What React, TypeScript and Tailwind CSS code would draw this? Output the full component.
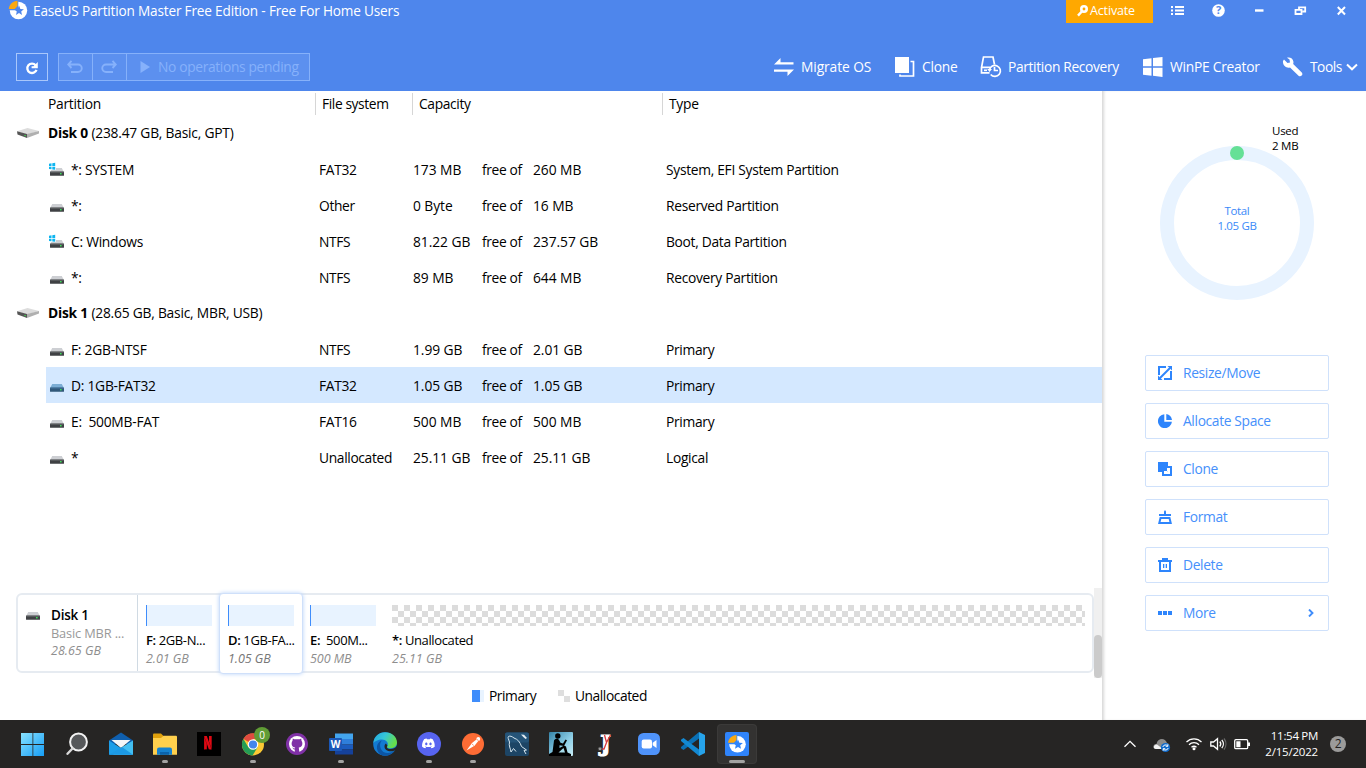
import React from "react";
import { FaDiscord } from "react-icons/fa";
import { SiNetflix } from "react-icons/si";

type Kind = "plain" | "win" | "selected";

interface Partition {
  name: string;
  fs: string;
  free: string;
  total: string;
  type: string;
  kind: Kind;
}

const disk0: Partition[] = [
  { name: "*: SYSTEM", fs: "FAT32", free: "173 MB", total: "260 MB", type: "System, EFI System Partition", kind: "win" },
  { name: "*:", fs: "Other", free: "0 Byte", total: "16 MB", type: "Reserved Partition", kind: "plain" },
  { name: "C: Windows", fs: "NTFS", free: "81.22 GB", total: "237.57 GB", type: "Boot, Data Partition", kind: "win" },
  { name: "*:", fs: "NTFS", free: "89 MB", total: "644 MB", type: "Recovery Partition", kind: "plain" },
];

const disk1: Partition[] = [
  { name: "F: 2GB-NTSF", fs: "NTFS", free: "1.99 GB", total: "2.01 GB", type: "Primary", kind: "plain" },
  { name: "D: 1GB-FAT32", fs: "FAT32", free: "1.05 GB", total: "1.05 GB", type: "Primary", kind: "selected" },
  { name: "E:  500MB-FAT", fs: "FAT16", free: "500 MB", total: "500 MB", type: "Primary", kind: "plain" },
  { name: "*", fs: "Unallocated", free: "25.11 GB", total: "25.11 GB", type: "Logical", kind: "plain" },
];

const STAR = "M11 5.600l1.400 3.300 3.500.3-2.700 2.300.8 3.500-3-1.900-3 1.900.8-3.500-2.700-2.300 3.500-.3z";

function AppMark({ className, back }: { className: string; back: string }) {
  return (
    <svg viewBox="0 0 20 20" className={className}>
      <circle cx="10.500" cy="10.500" r="8.700" fill="#fff" />
      <path d="M0 0H10.300V8.500L8.500 10.300H0Z" fill={back} />
      <path d="M9.500.8V6L6.800 9H.8C1.200 4.600 4.900 1 9.500.8Z" fill="#faa80f" />
      <path d={STAR} fill={back} />
    </svg>
  );
}

function DriveIcon({ kind }: { kind: Kind }) {
  const sel = kind === "selected";
  return (
    <svg viewBox="0 0 16 16" className="h-4 w-4 shrink-0">
      <path d="M3.200 7H12.800L15 11.200H1Z" fill={sel ? "#7cadd4" : "#cdcfd3"} />
      <rect x="1" y="10.600" width="14" height="4.200" rx=".6" fill={sel ? "#31587a" : "#3f4144"} />
      <rect x="1.500" y="10.600" width="13" height=".8" fill={sel ? "#4b7ca5" : "#7b7e81"} />
      <rect x="11" y="12" width="1.600" height="1.400" fill="#3de05a" />
      {kind === "win" && (
        <g>
          <path d="M0 1H7V9H0Z" fill="#fff" />
          <path d="M0 2.700L2.500 2.300V5H0ZM3.300 2.200L6.200 1.800V5H3.300ZM0 5.800H2.500V8.200L0 7.900ZM3.300 5.800H6.200V8.800L3.300 8.400Z" fill="#0db5f0" />
        </g>
      )}
    </svg>
  );
}

function DiskIcon() {
  return (
    <svg viewBox="0 0 22 12" className="h-3 w-[22px] shrink-0">
      <path d="M0 4.200L10.500 1 22 4 10 7.500Z" fill="#dcdcdc" />
      <path d="M0 4.200L10 6.900V11L.5 7.600Z" fill="#555" />
      <path d="M10 6.900L22 4V6.500L10 11Z" fill="#b0b0b0" />
      <rect x="7.300" y="8" width="1.600" height="1.200" fill="#44c552" />
    </svg>
  );
}

function Row({ p }: { p: Partition }) {
  return (
    <div className={`ml-[46px] flex h-9 items-center pl-[3px] ${p.kind === "selected" ? "bg-[#d4e8ff]" : ""}`}>
      <DriveIcon kind={p.kind} />
      <div className="ml-1.5 grid grow grid-cols-[248px_94px_69px_51px_133px_1fr] whitespace-pre pt-[3px]">
        <span>{p.name}</span>
        <span className="tracking-[-0.350px]">{p.fs}</span>
        <span className="tracking-[-0.050px]">{p.free}</span>
        <span className="tracking-[-0.350px]">free of</span>
        <span className="tracking-[-0.050px]">{p.total}</span>
        <span className="tracking-[-0.300px]">{p.type}</span>
      </div>
    </div>
  );
}

function DiskRow({ name, info }: { name: string; info: string }) {
  return (
    <div className="flex h-9 items-center gap-[9px] pl-[17px]">
      <DiskIcon />
      <span className="tracking-[-0.220px]">
        <b className="font-bold">{name}</b> {info}
      </span>
    </div>
  );
}

function Header() {
  return (
    <header className="h-[91px] bg-[#4e86ec] text-white">
      <div className="flex h-[23px] items-start">
        <AppMark className="ml-2 h-5 w-5" back="#4e86ec" />
        <h1 className="ml-[5px] mt-[1px] text-[13.600px] leading-5 tracking-[-0.175px]">EaseUS Partition Master Free Edition - Free For Home Users</h1>
        <div className="ml-auto flex h-[23px] w-[87px] justify-start bg-[#ffa800] pl-[11px] text-[12.500px] tracking-[-0.150px]">
          <svg viewBox="0 0 12 12" className="mt-[5px] h-3 w-3">
            <circle cx="7" cy="4" r="2.700" fill="none" stroke="#fff" strokeWidth="2.600" />
            <path d="M5.200 6L1 10.600" stroke="#fff" strokeWidth="2.400" />
          </svg>
          <span className="ml-px mt-[1px] leading-5">Activate</span>
        </div>
        <svg viewBox="0 0 213 23" className="h-[23px] w-[213px]">
          <g fill="#fff">
            <path d="M18 6h2v2h-2zM22 6h9v2h-9zM18 9.500h2v2h-2zM22 9.500h9v2h-9zM18 13h2v2h-2zM22 13h9v2h-9z" />
            <circle cx="65.500" cy="10.500" r="6.300" />
            <rect x="102" y="9.300" width="8.500" height="2.400" />
          </g>
          <text x="65.500" y="14.400" textAnchor="middle" fontSize="11" fontWeight="700" fill="#4e86ec">?</text>
          <path d="M146 9V7.300H152.200V11.500H149.500M142.500 9.800H148.500V14H142.500Z" fill="none" stroke="#fff" strokeWidth="1.800" />
          <path d="M184.800 7L192 14.500M192 7L184.800 14.500" stroke="#fff" strokeWidth="2" />
        </svg>
      </div>

      <div className="flex h-[68px] items-start pt-[30px]">
        <button className="ml-4 grid h-7 w-8 place-items-center border border-[#a9c7fb]">
          <svg viewBox="0 0 14 14" className="mt-0.5 h-3.5 w-3.5">
            <path d="M10.600 4.200A4.700 4.700 0 1 0 11.500 8.800" fill="none" stroke="#fff" strokeWidth="2.300" />
            <path d="M12.800 1V7.200H6.600V5.200H8.500L12.800 1Z" fill="#fff" />
          </svg>
        </button>
        <div className="ml-2.5 flex h-7 w-[252px] border border-[#86b1fa] bg-[#5c90ef] text-[#86b1fb]">
          <div className="grid w-[34px] place-items-center border-r border-[#86b1fa]">
            <svg viewBox="0 0 16 14" className="mr-0.5 h-3.5 w-4">
              <path d="M4.500.8L1.200 4.500 4.500 8M1.500 4.500H11A3.700 3.700 0 0 1 11 12H4" fill="none" stroke="currentColor" strokeWidth="1.900" />
            </svg>
          </div>
          <div className="grid w-[34px] place-items-center border-r border-[#86b1fa]">
            <svg viewBox="0 0 16 14" className="mr-0.5 h-3.5 w-4">
              <path d="M11.500.8L14.800 4.500 11.500 8M14.500 4.500H5A3.700 3.700 0 0 0 5 12H12" fill="none" stroke="currentColor" strokeWidth="1.900" />
            </svg>
          </div>
          <svg viewBox="0 0 10 12" className="ml-[13px] mt-[7px] h-3 w-2.5">
            <path d="M.5 0L10 6 .5 12Z" fill="currentColor" />
          </svg>
          <span className="ml-2 whitespace-nowrap leading-[26px] tracking-[-0.350px]">No operations pending</span>
        </div>

        <nav className="ml-auto flex h-7 items-center whitespace-nowrap">
          <div className="flex w-[121px] items-center gap-1.5">
            <svg viewBox="0 0 22 20" className="-ml-px h-5 w-[22px]">
              <path d="M1 7.500L7.500 1V5.300H20.500V7.500ZM21 12.500L14.500 19V14.700H1V12.500Z" fill="#fff" />
            </svg>
            <span className="tracking-[-0.100px]">Migrate OS</span>
          </div>
          <div className="flex w-[85px] items-center gap-1.5">
            <svg viewBox="0 0 21 20" className="-ml-px mr-px h-5 w-[21px]">
              <path d="M1 0H15V16H1Z" fill="#fff" />
              <path d="M16.500 4.500H19.500V19H6V17.500" fill="none" stroke="#fff" strokeWidth="1.700" />
            </svg>
            <span>Clone</span>
          </div>
          <div className="flex w-[163px] items-center gap-1.5">
            <svg viewBox="0 0 22 22" className="h-[22px] w-[22px]">
              <g fill="none" stroke="#fff" strokeWidth="1.700">
                <path d="M9.500 16.800H1.500V11.500L3.500 1H13L14.500 8.500M1.500 11.300H10" />
                <path d="M4 14.300H7" />
                <path d="M9.500 14A5.500 5.500 0 1 1 10.700 18.500M14.500 11V14.500H18" />
              </g>
              <path d="M7.200 13H12L9.600 16Z" fill="#fff" />
            </svg>
            <span className="tracking-[-0.350px]">Partition Recovery</span>
          </div>
          <div className="flex w-[139px] items-center gap-1.5">
            <svg viewBox="0 0 21 20" className="-ml-px mr-px h-5 w-[21px]">
              <path d="M1 2.200L9.500 1.200V9.200H1ZM11 1L20.500 0V9.200H11ZM1 10.800H9.500V18.800L1 17.800ZM11 10.800H20.500V20L11 18.800Z" fill="#fff" />
            </svg>
            <span>WinPE Creator</span>
          </div>
          <div className="flex w-[84px] items-center">
            <svg viewBox="0 0 22 20" className="h-5 w-[22px]">
              <path d="M2 2.500L5.500 6 8 5.500 7.500 2.500 5 .8C8 0 11 1.500 11.500 5L11.200 7 20 15.800C21.300 18.200 18.800 20.200 16.800 19L8 10.500C4.500 11.500.5 8.500 1 4Z" fill="#fff" />
            </svg>
            <span className="ml-1.5 tracking-[-0.500px]">Tools</span>
            <svg viewBox="0 0 12 8" className="ml-1 h-2 w-3">
              <path d="M1 1.500L6 6.300 11 1.500" fill="none" stroke="#fff" strokeWidth="2" />
            </svg>
          </div>
        </nav>
      </div>
    </header>
  );
}

function MapCell({ drive, label, size, active }: { drive: string; label: string; size: string; active?: boolean }) {
  return (
    <div
      className={`flex shrink-0 flex-col ${
        active
          ? "z-10 -mx-px -mb-[3px] -mt-[2px] w-[84px] rounded border border-[#cfe0fa] bg-white pl-2 pt-[11px] shadow-[0_0_4px_#b9d3fa]"
          : "w-[82px] pl-2 pt-[10px]"
      }`}
    >
      <div className="h-[21px] w-[66px] border-l border-[#3f8dfb] bg-[#e8f3ff]" />
      <span className="mt-[5px] whitespace-pre text-[13px] leading-[18px] tracking-[-0.380px]">
        <b className="font-semibold">{drive}</b>
        {label}
      </span>
      <span className={`text-[12.500px] italic leading-[19px] tracking-[-0.050px] ${active ? "text-[#777]" : "text-[#8e8e8e]"}`}>{size}</span>
    </div>
  );
}

function DiskMap() {
  return (
    <section className="flex h-[90px]">
      <div className="ml-[16px] mt-[5px] flex h-[80px] w-[1078px] rounded-md border-2 border-[#e6ebf1]">
        <div className="flex w-[120px] border-r border-[#d0dae3] pl-[7px] pt-[11px]">
          <div className="-mt-px">
            <DriveIcon kind="plain" />
          </div>
          <div className="ml-2.5 flex flex-col whitespace-nowrap text-[12.800px] leading-[18px]">
            <b className="text-[13.500px] font-semibold leading-[19px]">Disk 1</b>
            <span className="-mt-px tracking-[-0.150px] text-[#999]">Basic MBR ...</span>
            <span className="text-[12.500px] italic leading-[17px] tracking-normal text-[#8e8e8e]">28.65 GB</span>
          </div>
        </div>
        <MapCell drive="F:" label=" 2GB-N..." size="2.01 GB" />
        <MapCell drive="D:" label=" 1GB-FA..." size="1.05 GB" active />
        <MapCell drive="E:" label="  500M..." size="500 MB" />
        <div className="flex flex-col pl-2 pt-[10px]">
          <div className="h-[21px] w-[693px] bg-[repeating-conic-gradient(#ffffff_0_25%,#dcdcdc_0_50%)] bg-[length:12px_12px]" />
          <span className="mt-[5px] text-[13px] leading-[18px] tracking-[-0.380px]">
            <b className="font-semibold">*:</b> Unallocated
          </span>
          <span className="text-[12.500px] italic leading-[19px] tracking-normal text-[#8e8e8e]">25.11 GB</span>
        </div>
      </div>
      <div className="flex w-2 flex-col justify-end bg-[#f0f0f0]">
        <div className="h-[43px] rounded bg-[#cbcbcb]" />
      </div>
    </section>
  );
}

const actions: { label: string; icon: React.ReactNode }[] = [
  {
    label: "Resize/Move",
    icon: (
      <>
        <path d="M8 1H1V9M13 5V13H6" fill="none" stroke="currentColor" strokeWidth="2" />
        <path d="M2 12L12 2" stroke="currentColor" strokeWidth="1.900" />
        <path d="M9.500 0H14V4.500ZM0 9.500V14H4.500Z" fill="currentColor" />
      </>
    ),
  },
  {
    label: "Allocate Space",
    icon: <path d="M6.300.2V7.700H13.900A7 7 0 1 1 6.300.2ZM8.300 0A7 7 0 0 1 14 6H8.300Z" fill="currentColor" />,
  },
  {
    label: "Clone",
    icon: (
      <>
        <path d="M0 0H10V10H0Z" fill="currentColor" />
        <path d="M10 5H13V13H5V10" fill="none" stroke="currentColor" strokeWidth="2" />
        <path d="M6 9.500H9.500V6" fill="none" stroke="#fff" strokeWidth="1" />
      </>
    ),
  },
  {
    label: "Format",
    icon: (
      <>
        <path d="M6 1.500L7 0 8 1.500V4H13V6H1V4H6Z" fill="currentColor" />
        <path d="M2.500 8H11.500L12.700 13H1.300Z" fill="none" stroke="currentColor" strokeWidth="2" />
      </>
    ),
  },
  {
    label: "Delete",
    icon: (
      <path d="M0 2H4V0H10V2H14V4H13V14H1V4H0ZM3 4V12H11V4ZM5 6H6.300V10H5ZM7.700 6H9V10H7.700Z" fill="currentColor" fillRule="evenodd" />
    ),
  },
  { label: "More", icon: <path d="M0 5H4V9H0ZM5 5H9V9H5ZM10 5H14V9H10Z" fill="currentColor" /> },
];

function SidePanel() {
  return (
    <aside className="flex w-[264px] flex-col shadow-[inset_3px_0_3px_-1px_#d8d8d8]">
      <div className="relative ml-[58px] mt-[55px] grid h-[154px] w-[154px] place-items-center rounded-full border-[14px] border-[#e8f3ff]">
        <span className="absolute -top-3.5 left-[56px] h-3.5 w-3.5 rounded-full bg-[#65e096]" />
        <div className="mb-2.5 text-center text-[11.500px] leading-[15px] tracking-[-0.350px] text-[#3a89f8]">
          Total
          <br />
          1.05 GB
        </div>
        <div className="absolute -top-[37px] left-[98px] whitespace-nowrap text-[11.500px] leading-[15px] tracking-[-0.250px]">
          Used
          <br />2 MB
        </div>
      </div>
      <div className="ml-[43px] mt-[55px] flex w-[184px] flex-col gap-3 text-[#4690fb]">
        {actions.map((a) => (
          <button key={a.label} className="flex h-9 items-center rounded-[2px] border border-[#cfe1fb] px-3">
            <svg viewBox="0 0 14 14" className="h-3.5 w-3.5 text-[#2e85fc]">
              {a.icon}
            </svg>
            <span className="ml-[11px] pt-px tracking-[-0.350px]">{a.label}</span>
            {a.label === "More" && (
              <svg viewBox="0 0 6 8" className="ml-auto mr-0.5 h-2 w-1.5">
                <path d="M1 .5L4.500 4 1 7.500" fill="none" stroke="#3f8dfb" strokeWidth="1.900" />
              </svg>
            )}
          </button>
        ))}
      </div>
    </aside>
  );
}

const apps: { name: string; open?: "dot" | "active"; icon: React.ReactNode }[] = [
  {
    name: "start",
    icon: (
      <>
        <defs>
          <linearGradient id="start" gradientUnits="userSpaceOnUse" x1="0" y1="0" x2="24" y2="24">
            <stop offset="0" stopColor="#8ae3ff" />
            <stop offset="1" stopColor="#139cf6" />
          </linearGradient>
        </defs>
        <path d="M0 1H11.500V12H0ZM12.300 1H23V12H12.300ZM0 13H11.500V24H0ZM12.300 13H23V24H12.300Z" fill="url(#start)" />
      </>
    ),
  },
  {
    name: "search",
    icon: (
      <>
        <circle cx="13.500" cy="10" r="8.400" fill="#56585a" stroke="#f2f2f2" strokeWidth="2" />
        <path d="M7.500 16.500L2.500 21.800" stroke="#d8d8d8" strokeWidth="2.400" strokeLinecap="round" />
      </>
    ),
  },
  {
    name: "mail",
    icon: (
      <>
        <path d="M0 8.500L12 .5 24 8.500V12H0Z" fill="#0f5fae" />
        <path d="M2.500 8H21.500L12 16Z" fill="#f4f6f8" />
        <path d="M0 8.500L15 18 24 22.800H0Z" fill="#1d9ee8" />
        <path d="M24 8.500V22.800H4L14 14.500Z" fill="#42bff2" />
        <path d="M0 22.800L13 15 24 22.800Z" fill="#1c99e4" />
      </>
    ),
  },
  {
    name: "files",
    open: "dot",
    icon: (
      <>
        <path d="M0 2.500Q0 1.500 1 1.500H8L10.500 4V8H0Z" fill="#e0a10c" />
        <path d="M0 6H8L10.500 3.800H23Q24 3.800 24 5V22.800H0Z" fill="#ffd04d" />
        <path d="M4 22.800V17.500Q4 15.500 6 15.500H17Q19 15.500 19 17.500V22.800Z" fill="#1582cf" />
        <path d="M7 22.800V20H16V22.800Z" fill="#0b63ab" />
      </>
    ),
  },
  {
    name: "netflix",
    icon: (
      <>
        <rect width="24" height="24" fill="#000" />
        <SiNetflix x="4" y="4" width="16" height="16" color="#e00914" />
      </>
    ),
  },
  {
    name: "chrome",
    open: "dot",
    icon: (
      <>
        <circle cx="12" cy="12.500" r="11" fill="#fbc934" />
        <path d="M12 12.500L2.400 7A11 11 0 0 1 21.600 7H12Z" fill="#df4b40" />
        <path d="M2.400 7A11 11 0 0 0 11.500 23.500L16.500 15.500 7.500 15.500Z" fill="#249d55" />
        <circle cx="12" cy="12.500" r="5.200" fill="#fff" />
        <circle cx="12" cy="12.500" r="4.100" fill="#4285ee" />
      </>
    ),
  },
  {
    name: "github",
    icon: (
      <>
        <circle cx="12" cy="12" r="11" fill="#8031a7" />
        <circle cx="12" cy="12" r="8" fill="#fff" />
        <path
          d="M12 7.300C13.200 7.300 14 7.400 14.700 7.200L16.200 6.600 16.500 8.700C18.200 11.200 17.400 15.300 13.800 15.600L14.300 20.200H9.800V17.500C8 17.800 8 16 7 15.600 8.300 15.500 8.600 17 9.800 16.200L10.200 15.600C6.600 15.300 5.800 11.200 7.500 8.700L7.800 6.600 9.300 7.200Z"
          fill="#8031a7"
        />
      </>
    ),
  },
  {
    name: "word",
    open: "dot",
    icon: (
      <>
        <path d="M6 1.500H24V7H6Z" fill="#43a5ee" />
        <path d="M6 7H24V12.500H6Z" fill="#2f7fdb" />
        <path d="M6 12.500H24V17.500H6Z" fill="#1c5cbe" />
        <path d="M6 17.500H24V22.500H6Z" fill="#15419a" />
        <rect y="6" width="13" height="13" rx="1" fill="#1b58b8" />
        <text x="6.500" y="16" textAnchor="middle" fontSize="10" fontWeight="700" fill="#fff">W</text>
      </>
    ),
  },
  {
    name: "edge",
    icon: (
      <>
        <defs>
          <linearGradient id="edge" x1="0" x2="1" y1="0" y2=".4">
            <stop offset="0" stopColor="#22a7e0" />
            <stop offset=".5" stopColor="#35c6d8" />
            <stop offset="1" stopColor="#66df4b" />
          </linearGradient>
        </defs>
        <circle cx="12" cy="12" r="11.800" fill="#137bd2" />
        <path d="M.4 11C1 4.500 6 .2 12 .2 19 .2 24 5 24 10.500 24 14.500 20.500 16.300 17 16.300 14 16.300 13.500 15 14.500 13.700 16 11 13 7.500 9 7.500 5 7.500 1.500 9.500.4 11Z" fill="url(#edge)" />
        <path d="M9 8.500C6 11 6.500 17 10.500 20 14 22 19.500 21 22 17.700 18 25 9 25.500 5.500 20.500 2 15 5 9.500 9 8.500Z" fill="#0c55a4" />
        <path d="M14.500 13.700C13 15.500 14.500 17 17.500 17 20 17 22.500 16 24 14V18L21 18.800C16 20.500 11.500 18 11.500 14.500 11.500 13 12 12 13 11.500Z" fill="#262524" />
      </>
    ),
  },
  {
    name: "discord",
    open: "dot",
    icon: (
      <>
        <circle cx="12" cy="12" r="12" fill="#5764f0" />
        <FaDiscord x="4.500" y="4.500" width="15" height="15" color="#fff" />
      </>
    ),
  },
  {
    name: "postman",
    open: "dot",
    icon: (
      <>
        <circle cx="12" cy="12" r="11" fill="#fd6c35" />
        <path d="M5.500 18.500L11 11 17 6.300 18.300 7.800 13.500 13.700Z" fill="#fff" />
        <circle cx="17.300" cy="7" r="1.900" fill="#fff" />
        <path d="M11 12L12.800 13.500M15.700 7L17.500 9" stroke="#fd6c35" strokeWidth=".7" />
      </>
    ),
  },
  {
    name: "mysql",
    icon: (
      <>
        <rect y=".5" width="24" height="23.500" rx="2" fill="#1d4565" />
        <rect y=".5" width="24" height="10" rx="2" fill="#255478" />
        <path d="M6 20C5.500 16 3.500 14 4.500 10 3.500 7 2.500 5.500 3.500 4.500 5 3.500 7 4.500 9 6 13 7.500 15 10 16.500 14.500L21.500 18 19 18.500 21 22M6 20L8.500 16.500 11 19.500" fill="none" stroke="#d5e5ee" strokeWidth="1" />
        <path d="M16 2.500L19 2.700 22 6 20.500 7 17.800 4.500Z" fill="#e6eef3" />
      </>
    ),
  },
  {
    name: "kindle",
    icon: (
      <>
        <defs>
          <linearGradient id="kindle" x1="0" x2="1" y1="0" y2="1">
            <stop offset="0" stopColor="#3483a8" />
            <stop offset=".6" stopColor="#91d1e8" />
            <stop offset="1" stopColor="#c8edf5" />
          </linearGradient>
        </defs>
        <rect width="24" height="24" rx="1" fill="url(#kindle)" />
        <circle cx="8.800" cy="4" r="2.700" fill="#000" />
        <path d="M5 8.500C6 6.500 9 6.300 10 8L11.500 10.800 14 11.500 16.500 7.500 18 8.200 15 14 10.500 13.300 10.500 16 15 13.500 17 14.500 18.500 20.500 22 22V24H0V22L3.500 20Z" fill="#000" />
        <path d="M14.500 16L16 20.500H9.500Z" fill="#a5dbea" />
      </>
    ),
  },
  {
    name: "journal",
    icon: (
      <>
        <text
          x="12.500"
          y="18.500"
          textAnchor="middle"
          fontFamily="DejaVu Serif, serif"
          fontSize="22"
          fontWeight="700"
          letterSpacing="0"
          fill="#fff"
          stroke="#fff"
          strokeWidth="1.200"
        >
          J
        </text>
        <path d="M11.500 3L13.500 10.500 17.500 3M13.500 10.500L11 17H8" fill="none" stroke="#d83a3f" strokeWidth="1.300" />
        <circle cx="7" cy="16.800" r="1.900" fill="#999" stroke="#333" strokeWidth=".8" />
      </>
    ),
  },
  {
    name: "zoom",
    icon: (
      <>
        <rect x="1" y="1" width="22" height="22" rx="5.500" fill="#4f93fa" />
        <rect x="4.700" y="7.500" width="10.300" height="9" rx="2" fill="#fff" />
        <path d="M15.700 10.800L19.500 8V16L15.700 13.200Z" fill="#fff" />
      </>
    ),
  },
  {
    name: "code",
    icon: (
      <>
        <path d="M18 0V6.500L2.500 18 0 16.200V15Z" fill="#0a70b5" />
        <path d="M18 24V17.500L2.500 6 0 7.800V9Z" fill="#1389d2" />
        <path d="M18 0L24 3V21L18 24Z" fill="#26a3ea" />
      </>
    ),
  },
  {
    name: "partition",
    open: "active",
    icon: (
      <>
        <rect width="24" height="24" rx="2" fill="#2f84fb" />
        <circle cx="12.500" cy="12.300" r="8.300" fill="#fff" />
        <path d="M2 2H12.300V10.500L10.500 12.300H2Z" fill="#2f84fb" />
        <path d="M11.500 3V8L9 10.800H3C3.500 6.500 7 3.200 11.500 3Z" fill="#faa80f" />
        <path transform="translate(2 1.800)" d={STAR} fill="#2f84fb" />
      </>
    ),
  },
];

function Taskbar() {
  return (
    <footer className="flex h-12 items-center bg-[#262524] text-white">
      <div className="ml-[11px] flex">
        {apps.map((a) => (
          <div key={a.name} className="flex w-11 justify-center">
            <div
              className={`relative flex h-10 w-10 flex-col items-center rounded ${
                a.open === "active" ? "bg-[#333231] outline outline-[#3b3a39] -outline-offset-1" : ""
              }`}
            >
              <svg viewBox="0 0 24 24" className="mt-2 h-6 w-6 overflow-visible">
                {a.icon}
              </svg>
              {a.open && (
                <span className={`mt-1 h-[3px] rounded-full bg-[#a3a3a2] ${a.open === "active" ? "w-4" : "w-1.5"}`} />
              )}
              {a.name === "chrome" && (
                <span className="absolute left-[21px] top-[3px] grid h-4 w-4 place-items-center rounded-full bg-[#609c35] text-[10px] leading-none">
                  0
                </span>
              )}
            </div>
          </div>
        ))}
      </div>
      <svg viewBox="0 0 130 24" className="ml-auto h-6 w-[130px]">
        <g fill="none" stroke="#fff" strokeWidth="1.300">
          <path d="M4.500 14.700L10 9.300 15.500 14.700" />
          <path d="M66.500 10A10.500 10.500 0 0 1 81.500 10M69 12.700A7.200 7.200 0 0 1 79 12.700M71.500 15.300A3.800 3.800 0 0 1 76.500 15.300" />
          <path d="M90.800 10H93.500L97.500 6.700V17.300L93.500 14H90.800ZM99.800 9.500A4 4 0 0 1 99.800 14.500M101.800 7.800A6.500 6.500 0 0 1 101.800 16.200" />
          <path d="M104 6.500A9 9 0 0 1 104 17.500" stroke="#666" />
          <rect x="114.700" y="7.700" width="13" height="9" rx="1.200" />
        </g>
        <circle cx="74" cy="16.800" r="1.500" fill="#fff" />
        <path d="M116.300 9.300H120.500V15.200H116.300ZM128 10.500H130V14H128Z" fill="#fff" />
        <path d="M36 17C32 17 33 11.500 36.500 12 37.500 6 45 5 47 11 50 11 50 17 47 17Z" fill="#8c8c8c" />
        <path d="M36 17C32.500 17 33.500 12 37 12.500L43 17Z" fill="#f3f3f3" />
        <circle cx="45.500" cy="15.500" r="4.600" fill="#0f6bcd" />
        <path d="M42.800 15A2.800 2.800 0 0 1 47.700 14M48.200 16A2.800 2.800 0 0 1 43.300 17M47.800 12.300V14.300H45.800M43.200 18.700V16.700H45.200" fill="none" stroke="#fff" strokeWidth="1" />
      </svg>
      <div className="ml-[12px] w-[56px] whitespace-nowrap text-right text-[11.500px] leading-4 tracking-[-0.300px]">
        <div>11:54 PM</div>
        <div className="tracking-[-0.200px]">2/15/2022</div>
      </div>
      <span className="ml-3 mr-5 grid h-4 w-4 place-items-center rounded-full bg-[#9b9b9a] text-[12px] leading-none text-[#222]">2</span>
    </footer>
  );
}

export default function App() {
  return (
    <div className="flex h-[768px] w-[1366px] flex-col overflow-hidden bg-white font-['Open_Sans','Noto_Sans',sans-serif] text-[13.800px] tracking-[-0.250px] text-black">
      <Header />
      <div className="flex h-[629px]">
        <main className="flex w-[1102px] flex-col">
          <div className="flex h-6 items-center pl-[48px] pt-0.5 leading-[22px]">
            <span className="w-[267px]">Partition</span>
            <span className="w-[97px] border-l border-[#d6d6d6] pl-1.5 tracking-[-0.400px]">File system</span>
            <span className="w-[250px] border-l border-[#d6d6d6] pl-1.5 tracking-[-0.350px]">Capacity</span>
            <span className="border-l border-[#d6d6d6] pl-1.5">Type</span>
          </div>
          <DiskRow name="Disk 0" info="(238.47 GB, Basic, GPT)" />
          {disk0.map((p, i) => (
            <Row key={i} p={p} />
          ))}
          <DiskRow name="Disk 1" info="(28.65 GB, Basic, MBR, USB)" />
          {disk1.map((p, i) => (
            <Row key={i} p={p} />
          ))}
          <div className="grow" />
          <DiskMap />
          <div className="flex h-[42px] items-center pb-1.5 pl-[472px]">
            <span className="h-3 w-3 border-r-4 border-[#e8f3ff] bg-[#3f8dfb]" />
            <span className="ml-[5px] w-[69px] tracking-[-0.450px]">Primary</span>
            <svg viewBox="0 0 12 12" className="h-3 w-3">
              <path d="M0 0H6V6H12V12H6V6H0Z" fill="#dedede" />
            </svg>
            <span className="ml-[5px] tracking-[-0.450px]">Unallocated</span>
          </div>
        </main>
        <SidePanel />
      </div>
      <Taskbar />
    </div>
  );
}
